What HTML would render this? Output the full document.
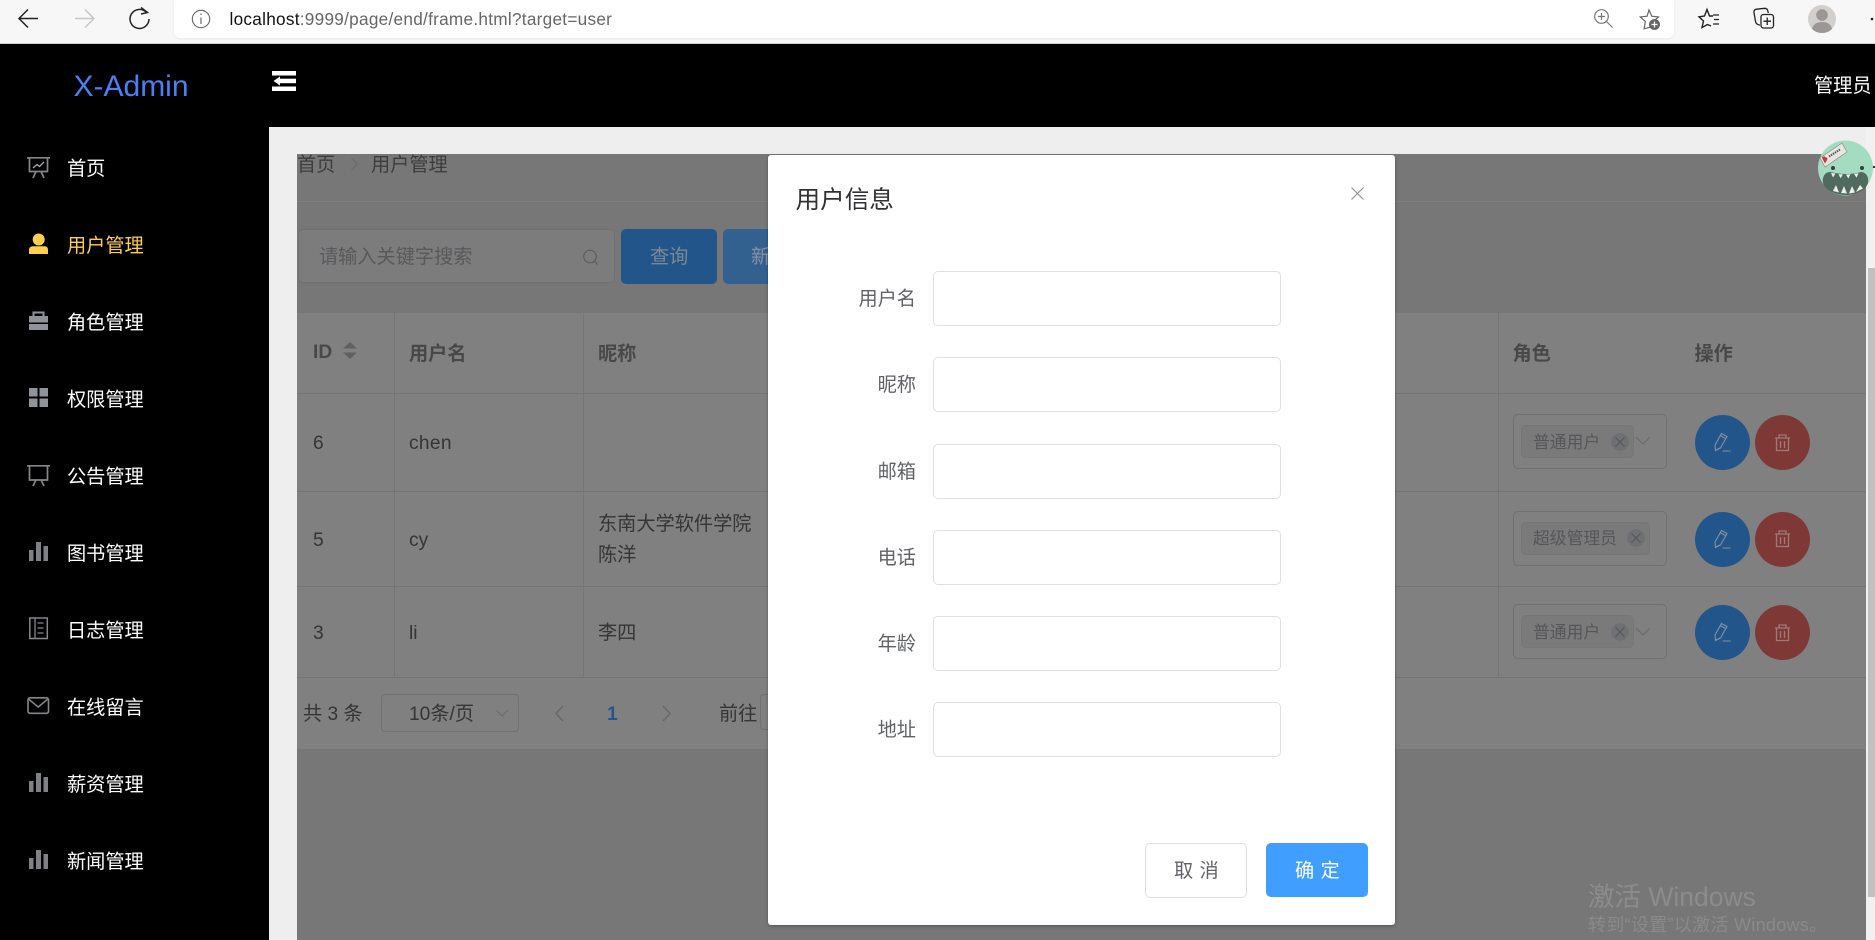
<!DOCTYPE html>
<html lang="zh-CN">
<head>
<meta charset="utf-8">
<title>用户管理</title>
<style>
html,body{margin:0;padding:0;width:1875px;height:940px;overflow:hidden;background:#eee}
body{position:relative;font-family:"Liberation Sans","Noto Sans CJK SC",sans-serif;font-size:19.2px}
.a{position:absolute}
.t{position:absolute;white-space:nowrap;line-height:30px;height:30px;margin-top:2px}
svg{position:absolute;overflow:visible}
.side{color:#fff}
.d{color:#353535}
.h{color:#484848;font-weight:700}
.line{position:absolute;background:#747578}
.sel{position:absolute;left:1513px;width:152px;height:53px;border:1px solid #6f7073;border-radius:5px}
.tag{position:absolute;left:1521px;height:33px;background:#7a7a7a;border:1px solid #767676;box-sizing:border-box;border-radius:5px}
.round{position:absolute;width:55px;height:55px;border-radius:50%}
.inp{position:absolute;left:933px;width:346px;height:53px;border:1px solid #dcdfe6;border-radius:5px;background:#fff}
.lab{position:absolute;right:959px;color:#606266;white-space:nowrap;line-height:30px;height:30px;margin-top:2px}
</style>
</head>
<body>

<!-- browser chrome -->
<div class="a" style="left:0;top:0;width:1875px;height:43px;background:#f7f7f7;border-bottom:1px solid #cfcfcf"></div>
<div class="a" style="left:174px;top:-6px;width:1500px;height:44px;background:#fff;border-radius:6px;box-shadow:0 1px 2px rgba(0,0,0,.06)"></div>
<svg style="left:0;top:0" width="1875" height="43" fill="none">
  <path d="M38 18.5H20M28 9.5l-9 9 9 9" stroke="#222" stroke-width="1.5"/>
  <path d="M75 18.5h18M85 9.5l9 9-9 9" stroke="#c8c8c8" stroke-width="1.5"/>
  <path d="M146.5 12.5a9.5 9.5 0 1 0 2.5 6.5" stroke="#222" stroke-width="1.5"/>
  <path d="M141 7.5l6.5 5-6.5 1.5" stroke="#222" stroke-width="1.5"/>
  <circle cx="201" cy="19" r="8.7" stroke="#666" stroke-width="1.1"/>
  <path d="M201 17.5v6.5M201 13.5v1.5" stroke="#666" stroke-width="1.2"/>
  <circle cx="1601.5" cy="16.5" r="6.8" stroke="#777" stroke-width="1.2"/>
  <path d="M1606.5 21.5l6 6M1598 16.5h7M1601.5 13v7" stroke="#777" stroke-width="1.2"/>
  <path d="M1649 10l2.800 6.200 6.700.7-5 4.500 1.200 5-5.700 1-4.900 1.400 1.200-7.400-5-4.500 6.800-.7z" stroke="#666" stroke-width="1.200"/>
  <circle cx="1654.5" cy="24.5" r="5.500" fill="#666"/>
  <path d="M1651.500 24.500h6M1654.500 21.500v6" stroke="#fff" stroke-width="1.200"/>
  <path d="M1713 16h-3.500L1707 9.500 1704.500 16l-5.500.8 4.500 4.200-1.500 6.500 5.500-3 3.500 1.500" stroke="#222" stroke-width="1.400"/>
  <path d="M1713 15h6M1714 19.500h5M1713 24h6" stroke="#222" stroke-width="1.300"/>
  <rect x="1761" y="14.500" width="12.500" height="13.500" rx="2.500" stroke="#222" stroke-width="1.300"/>
  <path d="M1767.200 17.500v7.500M1763.500 21.200h7.500" stroke="#222" stroke-width="1.300"/>
  <path d="M1760 25c-3 0-4-1.500-4.500-3.500l-1.500-9c-.2-2 .5-3 2.500-3.300l8-.9c1.500 0 2.800.8 3.200 2.200l.6 2.500" stroke="#222" stroke-width="1.300"/>
  <circle cx="1822" cy="19" r="14" fill="#d2d0cd"/>
  <circle cx="1822" cy="15" r="5.800" fill="#9a9794"/>
  <path d="M1812 29c1-5 5-7 10-7s9 2 10 7c-2.500 2.500-6 4-10 4s-7.500-1.500-10-4z" fill="#9a9794"/>
  <circle cx="1872" cy="19" r="1.300" fill="#222"/>
</svg>
<div class="t" style="left:229.500px;top:4px;margin-top:0;font-size:17.200px;color:#666;letter-spacing:.27px"><span style="color:#111">localhost</span>:9999/page/end/frame.html?target=user</div>

<!-- top header + sidebar -->
<div class="a" style="left:0;top:44px;width:1875px;height:83px;background:#000"></div>
<div class="a" style="left:0;top:127px;width:269px;height:813px;background:#000"></div>
<div class="t" style="left:73.500px;top:70px;font-size:30px;color:#4a80f5">X-Admin</div>
<svg style="left:272px;top:71px" width="24" height="20">
  <rect x="0" y="0" width="24" height="4.500" fill="#fff"/>
  <rect x="0" y="15.500" width="24" height="4.500" fill="#fff"/>
  <rect x="8" y="7.700" width="16" height="4.500" fill="#fff"/>
  <path d="M1.500 10l6.500-4.500v9z" fill="#fff"/>
</svg>
<div class="t side" style="left:1814px;top:70px">管理员</div>

<div class="t side" style="left:67px;top:153px">首页</div>
<div class="t" style="left:67px;top:230px;color:#ffd04b">用户管理</div>
<div class="t side" style="left:67px;top:307px">角色管理</div>
<div class="t side" style="left:67px;top:384px">权限管理</div>
<div class="t side" style="left:67px;top:461px">公告管理</div>
<div class="t side" style="left:67px;top:538px">图书管理</div>
<div class="t side" style="left:67px;top:615px">日志管理</div>
<div class="t side" style="left:67px;top:692px">在线留言</div>
<div class="t side" style="left:67px;top:769px">薪资管理</div>
<div class="t side" style="left:67px;top:846px">新闻管理</div>

<svg style="left:0;top:0" width="269" height="940" fill="none">
  <g stroke="#85868a" stroke-width="1.700">
    <path d="M27 157.800h23M29.500 158v13.500h18V158M33 178l3-6.500M44 178l-3-6.500"/>
    <path d="M33 168l4-3.500 2.500 2 4.500-4.500" stroke-width="1.300" stroke="#aaa"/>
    <path d="M27 465.800h23M29.500 466v14h18v-14M33 486l3-6M44 486l-3-6"/>
  </g>
  <circle cx="38.700" cy="239.500" r="6" fill="#ffd04b"/>
  <path d="M29 254v-4c0-2.500 2-3.700 4-3.700h11.500c2 0 3.500 1.200 3.500 3.700v4z" fill="#ffd04b"/>
  <path d="M33.500 316v-3.500h10v3.500" stroke="#909399" stroke-width="2"/>
  <path d="M29 316h19v6.500H29zM29 324h19v6H29z" fill="#909399"/>
  <path d="M29 388h8.500v8.500H29zM39.500 388H48v8.500h-8.500zM29 398.500h8.500v8.500H29zM39.500 398.500H48v8.500h-8.500z" fill="#909399"/>
  <g fill="#808185">
    <path d="M29 550h4.500v11H29zM36 542h5v19h-5zM43.500 546H48v15h-4.500z"/>
    <path d="M29 781h4.500v11H29zM36 773h5v19h-5zM43.500 777H48v15h-4.500z"/>
    <path d="M29 858h4.500v11H29zM36 850h5v19h-5zM43.500 854H48v15h-4.500z"/>
  </g>
  <rect x="29.800" y="618" width="17.500" height="20.500" stroke="#85868a" stroke-width="1.500"/>
  <path d="M35 618v20M37.500 623h6M37.500 628h6M37.500 633h6" stroke="#85868a" stroke-width="1.300"/>
  <rect x="28" y="697.800" width="20.500" height="15.500" rx="2" stroke="#85868a" stroke-width="1.600"/>
  <path d="M28.500 699l9.700 8 9.700-8" stroke="#85868a" stroke-width="1.500"/>
</svg>

<!-- dimmed main region -->
<div class="a" style="left:297px;top:154px;width:1569px;height:786px;background:#777"></div>
<div class="a" style="left:297px;top:201px;width:1569px;height:1px;background:#7f7f7f"></div>
<div class="t" style="left:297px;top:149px;color:#3d3d3d">首页</div>
<svg style="left:350px;top:157px" width="10" height="14" fill="none"><path d="M1.500 1l6 6-6 6" stroke="#6b6b6b" stroke-width="1.200"/></svg>
<div class="t" style="left:371px;top:149px;color:#3d3d3d">用户管理</div>

<div class="a" style="left:298px;top:229px;width:317px;height:54px;box-sizing:border-box;background:#7c7c7c;border:1px solid #717171;border-radius:5px"></div>
<div class="t" style="left:319px;top:241px;color:#58595c">请输入关键字搜索</div>
<svg style="left:583px;top:249px" width="16" height="17" fill="none"><circle cx="7" cy="7.500" r="6.300" stroke="#5b5c5f" stroke-width="1.200"/><path d="M11.500 12l3 3.500" stroke="#5b5c5f" stroke-width="1.200"/></svg>
<div class="a" style="left:621px;top:229px;width:96px;height:55px;background:#22568a;border-radius:5px"></div>
<div class="t" style="left:650px;top:241px;color:#7e8894">查询</div>
<div class="a" style="left:723px;top:229px;width:60px;height:55px;background:#326190;border-radius:5px 0 0 5px"></div>
<div class="t" style="left:751px;top:241px;color:#87929f">新</div>

<!-- table -->
<div class="a" style="left:297px;top:313px;width:1569px;height:436px;background:#808080"></div>
<div class="line" style="left:297px;top:393px;width:1569px;height:1px"></div>
<div class="line" style="left:297px;top:491px;width:1569px;height:1px"></div>
<div class="line" style="left:297px;top:586px;width:1569px;height:1px"></div>
<div class="line" style="left:297px;top:677px;width:1569px;height:1px"></div>
<div class="line" style="left:394px;top:313px;width:1px;height:364px"></div>
<div class="line" style="left:583px;top:313px;width:1px;height:364px"></div>
<div class="line" style="left:1498px;top:313px;width:1px;height:364px"></div>

<div class="t h" style="left:313px;top:336px;font-size:19.200px">ID</div>
<svg style="left:343px;top:342px" width="14" height="17"><path d="M7 0l7 6.500H0zM7 17l7-6.500H0z" fill="#5f6063"/></svg>
<div class="t h" style="left:409px;top:338px">用户名</div>
<div class="t h" style="left:598px;top:338px">昵称</div>
<div class="t h" style="left:1512.500px;top:338px">角色</div>
<div class="t h" style="left:1694.500px;top:338px">操作</div>

<div class="t d" style="left:313px;top:427px">6</div>
<div class="t d" style="left:409px;top:427px;letter-spacing:.3px">chen</div>
<div class="t d" style="left:313px;top:524px">5</div>
<div class="t d" style="left:409px;top:524px">cy</div>
<div class="t d" style="left:598px;top:508px">东南大学软件学院</div>
<div class="t d" style="left:598px;top:539px">陈洋</div>
<div class="t d" style="left:313px;top:617px">3</div>
<div class="t d" style="left:409px;top:617px">li</div>
<div class="t d" style="left:598px;top:617px">李四</div>

<!-- role selects -->
<div class="sel" style="top:414px"></div>
<div class="sel" style="top:511px"></div>
<div class="sel" style="top:604px"></div>
<div class="tag" style="top:425px;width:113px"></div>
<div class="tag" style="top:522px;width:129px"></div>
<div class="tag" style="top:615px;width:113px"></div>
<div class="t" style="left:1533px;top:426px;font-size:16.800px;color:#555659">普通用户</div>
<div class="t" style="left:1533px;top:522px;font-size:16.800px;color:#555659">超级管理员</div>
<div class="t" style="left:1533px;top:616px;font-size:16.800px;color:#555659">普通用户</div>

<svg style="left:0;top:0" width="1875" height="940" fill="none">
  <circle cx="1620" cy="442" r="8.800" fill="#6f7074"/>
  <circle cx="1636" cy="538" r="8.800" fill="#6f7074"/>
  <circle cx="1620" cy="632" r="8.800" fill="#6f7074"/>
  <path d="M1615.500 437.500l9 9M1624.500 437.500l-9 9M1631.500 533.500l9 9M1640.500 533.500l-9 9M1615.500 627.500l9 9M1624.500 627.500l-9 9" stroke="#55565a" stroke-width="1.100"/>
  <path d="M1636 437l7 7 7-7M1636 628l7 7 7-7" stroke="#6a6b6e" stroke-width="1.200"/>

  <!-- pagination chevrons -->
  <path d="M563 706l-7 7.500 7 7.500M663 706l7 7.500-7 7.500" stroke="#68696c" stroke-width="1.600"/>
  <path d="M496 710l6 6 6-6" stroke="#6a6b6e" stroke-width="1.100"/>
</svg>

<!-- action buttons -->
<div class="round" style="left:1695px;top:415px;background:#22568a"></div>
<div class="round" style="left:1755px;top:415px;background:#7e3937"></div>
<div class="round" style="left:1695px;top:512px;background:#22568a"></div>
<div class="round" style="left:1755px;top:512px;background:#7e3937"></div>
<div class="round" style="left:1695px;top:605px;background:#22568a"></div>
<div class="round" style="left:1755px;top:605px;background:#7e3937"></div>
<svg style="left:0;top:0" width="1875" height="940" fill="none">
  <g stroke="#83909e" stroke-width="1.100">
    <path d="M1715.500 450.500l-.5-5.500 6.500-11.500 5.500 3-6.500 11.500zM1720 435.500l5.500 3M1715 450.500l5-2.500M1722.500 451h8"/>
    <path d="M1715.500 547.500l-.5-5.500 6.500-11.500 5.500 3-6.500 11.500zM1720 532.500l5.500 3M1715 547.500l5-2.500M1722.500 548h8"/>
    <path d="M1715.500 640.500l-.5-5.500 6.500-11.500 5.500 3-6.500 11.500zM1720 625.500l5.500 3M1715 640.500l5-2.500M1722.500 641h8"/>
  </g>
  <g stroke="#9c7a78" stroke-width="1.300">
    <path d="M1775 438h15M1779 438v-3h7v3M1776.500 438v12.500h12V438M1780.500 441v7M1784.500 441v7"/>
    <path d="M1775 534h15M1779 534v-3h7v3M1776.500 534v12.500h12V534M1780.500 537v7M1784.500 537v7"/>
    <path d="M1775 628h15M1779 628v-3h7v3M1776.500 628v12.500h12V628M1780.500 631v7M1784.500 631v7"/>
  </g>
</svg>

<!-- pagination -->
<div class="t d" style="left:303px;top:698px">共 3 条</div>
<div class="a" style="left:381px;top:694px;width:136px;height:36px;border:1px solid #707174;border-radius:4px"></div>
<div class="t d" style="left:409px;top:698px">10条/页</div>
<div class="t" style="left:607px;top:698px;color:#22568a;font-weight:700">1</div>
<div class="t d" style="left:719px;top:698px">前往</div>
<div class="a" style="left:760px;top:694px;width:20px;height:36px;box-sizing:border-box;border:1px solid #707174;border-right:0;border-radius:4px 0 0 4px"></div>

<!-- scrollbar -->
<div class="a" style="left:1866px;top:127px;width:9px;height:813px;background:#f1f1f1"></div>
<div class="a" style="left:1868px;top:268px;width:7px;height:629px;background:#c1c1c1"></div>

<!-- watermark -->
<div class="t" style="left:1588px;top:882px;margin-top:0;font-size:26.500px;color:#8c8c8c">激活 Windows</div>
<div class="t" style="left:1588px;top:910px;margin-top:0;font-size:18px;letter-spacing:.3px;color:#8a8a8a">转到“设置”以激活 Windows。</div>

<!-- mascot -->
<svg style="left:1818px;top:140px" width="56" height="56">
  <circle cx="27.500" cy="28" r="27.500" fill="#a4dcc2"/>
  <path d="M5 43c-1-6 2-11 7-11 5 1 10 2 16 2s11-1 15-2c5 0 8 5 7 11-2 7-11 12-22 12S7 50 5 43z" fill="#4f6a5f"/>
  <path d="M13 33l2 4.500 2.500-4zM20.500 34.200l2 4 2.500-3.800zM28 34.500l2.300 4 2.200-4.200zM36 33.800l2.500 4 2-4.500zM15 51l3-6 3 7.500zM23 53l3-7 3 7.500zM31 53.500l3-7.500 3 6.500zM38 52l4-7 3 3.500z" fill="#eeeee6"/>
  <circle cx="15" cy="28" r="2" fill="#33413c"/>
  <circle cx="44" cy="28" r="2" fill="#33413c"/>
  <path d="M2 18L24 3l5 9-22 15z" fill="#e8e6df" stroke="#8c8c85" stroke-width=".7"/>
  <path d="M4 18c1-2 3-2 3.500-.5 1.500-.5 2.500 1 1.500 2.500l-2 3.500z" fill="#c23a44"/>
  <path d="M11 16.500l11-7" stroke="#555" stroke-width="2" stroke-dasharray="1.500 .8"/>
</svg>
<div class="a" style="left:1873px;top:166px;width:2px;height:2px;background:#333"></div>

<!-- dialog -->
<div class="a" style="left:768px;top:155px;width:627px;height:770px;background:#fff;border-radius:3px;box-shadow:0 1px 3px rgba(0,0,0,.3)"></div>
<div class="t" style="left:795.500px;top:184px;font-size:24.600px;color:#303133">用户信息</div>
<svg style="left:1351px;top:187px" width="13" height="13" fill="none"><path d="M.5.500l12 12M12.500.500l-12 12" stroke="#909399" stroke-width="1.200"/></svg>

<div class="lab" style="top:283px">用户名</div>
<div class="inp" style="top:271px"></div>
<div class="lab" style="top:369px">昵称</div>
<div class="inp" style="top:357px"></div>
<div class="lab" style="top:456px">邮箱</div>
<div class="inp" style="top:444px"></div>
<div class="lab" style="top:542px">电话</div>
<div class="inp" style="top:530px"></div>
<div class="lab" style="top:628px">年龄</div>
<div class="inp" style="top:616px"></div>
<div class="lab" style="top:714px">地址</div>
<div class="inp" style="top:702px"></div>

<div class="a" style="left:1145px;top:843px;width:100px;height:53px;border:1px solid #dcdfe6;border-radius:5px;background:#fff"></div>
<div class="t" style="left:1174px;top:855px;color:#606266;letter-spacing:.5px">取&nbsp;消</div>
<div class="a" style="left:1266px;top:843px;width:102px;height:54px;background:#409eff;border-radius:5px"></div>
<div class="t" style="left:1295px;top:855px;color:#fff;letter-spacing:.5px">确&nbsp;定</div>

</body>
</html>
